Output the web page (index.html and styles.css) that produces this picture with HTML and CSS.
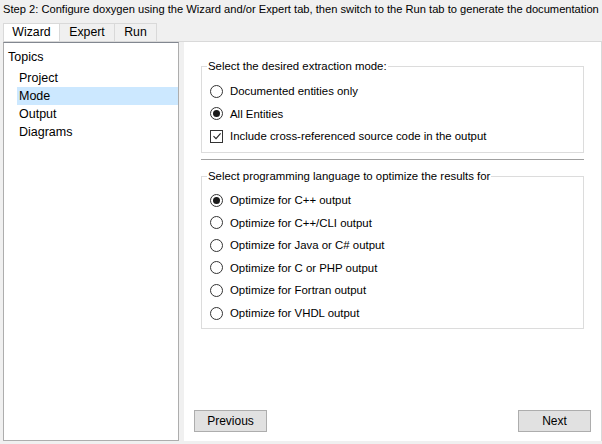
FILE: index.html
```html
<!DOCTYPE html>
<html>
<head>
<meta charset="utf-8">
<link rel="stylesheet" href="styles.css">
</head>
<body>
<div class="title">Step 2: Configure doxygen using the Wizard and/or Expert tab, then switch to the Run tab to generate the documentation</div>
<div class="tabs">
  <div class="tab active">Wizard</div>
  <div class="tab">Expert</div>
  <div class="tab">Run</div>
</div>
<div class="pane">
  <div class="list">
    <div class="topics">Topics</div>
    <div class="item">Project</div>
    <div class="item selected">Mode</div>
    <div class="item">Output</div>
    <div class="item">Diagrams</div>
  </div>
  <div class="splitter"></div>
  <div class="content">
    <fieldset class="group g1">
      <legend>Select the desired extraction mode:</legend>
      <div class="opt"><span class="radio"></span>Documented entities only</div>
      <div class="opt"><span class="radio on"></span>All Entities</div>
      <div class="opt"><span class="check"><svg width="10" height="10" viewBox="0 0 10 10"><path d="M1.5 5.2 L4 7.6 L8.6 2.4" fill="none" stroke="#222" stroke-width="1.1"/></svg></span>Include cross-referenced source code in the output</div>
    </fieldset>
    <div class="sep"></div>
    <fieldset class="group g2">
      <legend>Select programming language to optimize the results for</legend>
      <div class="opt"><span class="radio on"></span>Optimize for C++ output</div>
      <div class="opt"><span class="radio"></span>Optimize for C++/CLI output</div>
      <div class="opt"><span class="radio"></span>Optimize for Java or C# output</div>
      <div class="opt"><span class="radio"></span>Optimize for C or PHP output</div>
      <div class="opt"><span class="radio"></span>Optimize for Fortran output</div>
      <div class="opt"><span class="radio"></span>Optimize for VHDL output</div>
    </fieldset>
    <div class="spacer"></div>
    <div class="buttons">
      <button class="btn">Previous</button>
      <button class="btn">Next</button>
    </div>
  </div>
</div>
</body>
</html>
```

FILE: styles.css
```css
html, body {
  margin: 0;
  padding: 0;
  background: #f0f0f0;
  width: 602px;
  height: 444px;
  overflow: hidden;
  font-family: "Liberation Sans", Arial, sans-serif;
  font-size: 11.4px;
  color: #000;
}
.title {
  height: 18px;
  line-height: 18px;
  padding-left: 3px;
  white-space: nowrap;
  font-size: 11.15px;
}
.tabs {
  display: flex;
  margin-left: 3px;
  margin-top: 5px;
  height: 18px;
}
.tab {
  box-sizing: border-box;
  height: 18px;
  line-height: 17px;
  border: 1px solid #d9d9d9;
  border-bottom: none;
  border-left: none;
  background: #f0f0f0;
  text-align: center;
  font-size: 12.3px;
}
.tab:nth-child(1) { width: 57px; border-left: 1px solid #d9d9d9; }
.tab:nth-child(2) { width: 55px; }
.tab:nth-child(3) { width: 42px; }
.tab.active { background: #fff; }
.pane {
  display: flex;
  margin-left: 3px;
  width: 599px;
  height: 400px;
  box-sizing: border-box;
  border: 1px solid #d9d9d9;
  border-left: none;
  border-bottom: none;
}
.list {
  width: 176px;
  box-sizing: border-box;
  background: #fff;
  border: 1px solid #adadad;
  border-top-color: #828790;
  padding-top: 5px;
}
.topics {
  height: 18px;
  line-height: 18px;
  padding-left: 4px;
  font-size: 12.5px;
  margin-bottom: 3px;
}
.item {
  height: 18px;
  line-height: 18px;
  margin-left: 13px;
  padding-left: 2px;
  font-size: 12.5px;
}
.item.selected { background: #cce8ff; }
.splitter {
  width: 5px;
  background: #f0f0f0;
}
.content {
  flex: 1;
  background: #fff;
  display: flex;
  flex-direction: column;
  padding: 17px 17px 9px 17px;
}
.group {
  margin: 0;
  border: 1px solid #dcdcdc;
  padding: 6px 0 4px 0;
}
.group legend {
  padding: 0 1px;
  margin-left: 5px;
  line-height: 15px;
}
.opt {
  display: flex;
  align-items: center;
  height: 22.6px;
  padding-left: 8px;
  white-space: nowrap;
}
.g2 .opt:first-of-type { margin-top: -1px; }
.radio {
  box-sizing: border-box;
  width: 13px;
  height: 13px;
  border: 1px solid #333;
  border-radius: 50%;
  margin-right: 7px;
  display: flex;
  align-items: center;
  justify-content: center;
  background: #fff;
}
.radio.on::after {
  content: "";
  width: 7px;
  height: 7px;
  border-radius: 50%;
  background: #1a1a1a;
}
.check {
  box-sizing: border-box;
  width: 13px;
  height: 13px;
  border: 1px solid #333;
  margin-right: 7px;
  display: flex;
  align-items: center;
  justify-content: center;
}
.check svg { display: block; }
.sep {
  height: 1px;
  background: #a0a0a0;
  margin: 6px 0 8px 0;
  border-bottom: 1px solid #fff;
}
.spacer { flex: 1; }
.buttons {
  display: flex;
  justify-content: space-between;
  margin: 0 -7px;
}
.btn {
  width: 73px;
  height: 22px;
  box-sizing: border-box;
  background: #e1e1e1;
  border: 1px solid #adadad;
  font-family: "Liberation Sans", Arial, sans-serif;
  font-size: 12px;
  color: #000;
  padding: 0;
}
```
